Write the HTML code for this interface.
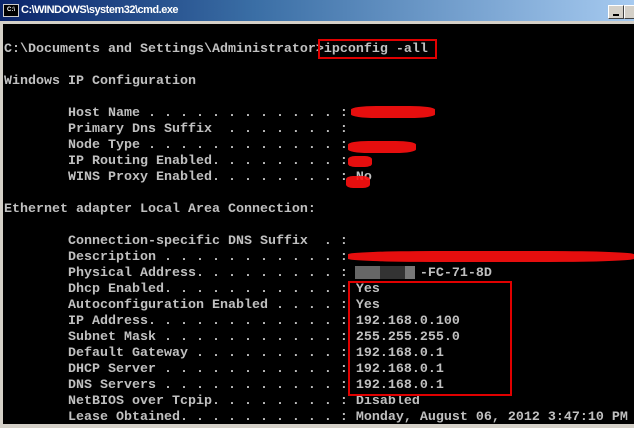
<!DOCTYPE html>
<html><head><style>
*{margin:0;padding:0}
body{width:634px;height:428px;overflow:hidden;background:#000;position:relative;font-family:"Liberation Mono",monospace}
#tb{position:absolute;left:0;top:0;width:634px;height:21px;background:linear-gradient(to right,#0a246a 0%,#3a6ea5 40%,#a6caf0 100%)}
#tt{position:absolute;left:21px;top:4px;color:#fff;font:bold 11px "Liberation Sans",sans-serif;letter-spacing:-0.5px}
#ic{position:absolute;left:3px;top:4px;width:14px;height:11px;background:#000;border:1px solid #ccc;color:#fff;font:bold 6px "Liberation Sans";line-height:10px;text-align:center}
.btn{position:absolute;top:5px;width:16px;height:14px;background:#d4d0c8;border:1px solid;border-color:#fff #404040 #404040 #fff;box-sizing:border-box}
#bd{position:absolute;left:0;top:21px;width:634px;height:3px;background:#d4d0c8}
#lb{position:absolute;left:0;top:21px;width:3px;height:407px;background:#d4d0c8}
#bb{position:absolute;left:0;top:424px;width:634px;height:4px;background:#d4d0c8}
pre{position:absolute;left:4px;top:42px;color:#c0c0c0;font-size:13.33px;line-height:16px;font-weight:bold;font-family:"Liberation Mono",monospace}
.box{position:absolute;border:2px solid #e00000}
.r{position:absolute;background:#ff1010;border-radius:30%;opacity:.9}
.g{position:absolute;background:#777}
</style></head><body>
<div id="tb"><div id="ic">C:\</div><div id="tt">C:\WINDOWS\system32\cmd.exe</div>
<div class="btn" style="left:608px"><div style="position:absolute;left:4px;top:8px;width:6px;height:2px;background:#000"></div></div>
<div class="btn" style="left:624px"></div></div>
<div id="bd"></div><div id="lb"></div>
<pre>C:\Documents and Settings\Administrator&gt;ipconfig -all

Windows IP Configuration

        Host Name . . . . . . . . . . . . :
        Primary Dns Suffix  . . . . . . . :
        Node Type . . . . . . . . . . . . :
        IP Routing Enabled. . . . . . . . :
        WINS Proxy Enabled. . . . . . . . : No

Ethernet adapter Local Area Connection:

        Connection-specific DNS Suffix  . :
        Description . . . . . . . . . . . :
        Physical Address. . . . . . . . . :         -FC-71-8D
        Dhcp Enabled. . . . . . . . . . . : Yes
        Autoconfiguration Enabled . . . . : Yes
        IP Address. . . . . . . . . . . . : 192.168.0.100
        Subnet Mask . . . . . . . . . . . : 255.255.255.0
        Default Gateway . . . . . . . . . : 192.168.0.1
        DHCP Server . . . . . . . . . . . : 192.168.0.1
        DNS Servers . . . . . . . . . . . : 192.168.0.1
        NetBIOS over Tcpip. . . . . . . . : Disabled
        Lease Obtained. . . . . . . . . . : Monday, August 06, 2012 3:47:10 PM</pre>
<div class="r" style="left:351px;top:106px;width:84px;height:12px"></div>
<div class="r" style="left:348px;top:141px;width:68px;height:12px"></div>
<div class="r" style="left:348px;top:156px;width:24px;height:11px"></div>
<div class="r" style="left:346px;top:176px;width:24px;height:12px"></div>
<div class="r" style="left:348px;top:251px;width:286px;height:11px"></div>
<div class="g" style="left:355px;top:266px;width:36px;height:13px;background:#666"></div>
<div class="g" style="left:380px;top:266px;width:32px;height:13px;background:#333"></div>
<div class="g" style="left:405px;top:266px;width:10px;height:13px;background:#777"></div>
<div class="box" style="left:318px;top:39px;width:115px;height:16px"></div>
<div class="box" style="left:348px;top:281px;width:160px;height:111px"></div>
<div id="bb"></div>
</body></html>
